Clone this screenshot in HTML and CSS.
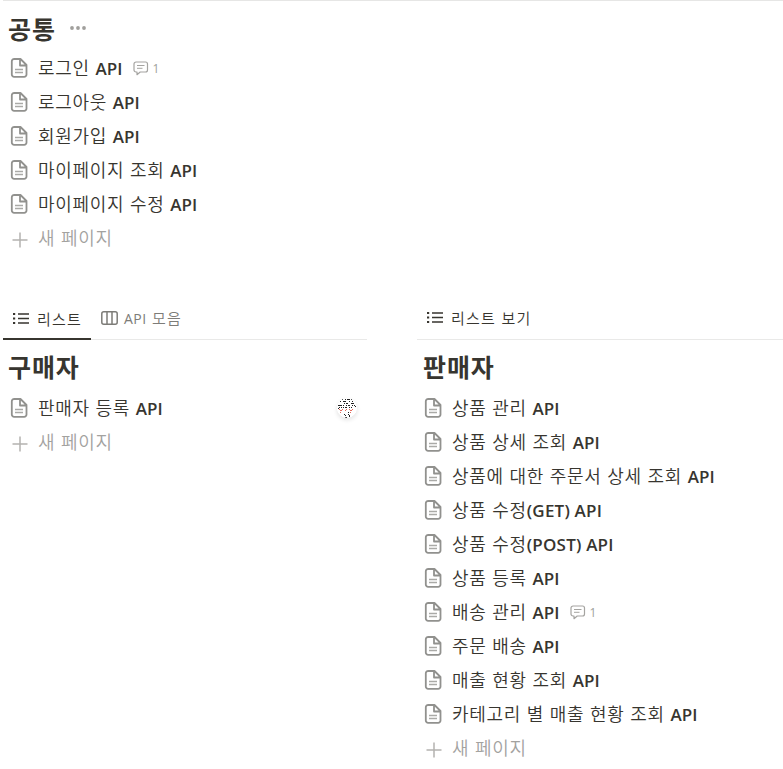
FILE: index.html
```html
<!DOCTYPE html>
<html lang="ko">
<head>
<meta charset="utf-8">
<title>API</title>
<link rel="stylesheet" href="styles.css">
</head>
<body>
<svg class="defs" aria-hidden="true">
  <symbol id="doc" viewBox="0 0 18 22"><path d="M4 2h6.500l6 6v9.500a2.300 2.300 0 0 1-2.300 2.300H4.100a2.300 2.300 0 0 1-2.300-2.300V4.300A2.300 2.300 0 0 1 4.100 2zM10 2.300v6.200h6.200" fill="none" stroke="#91918e" stroke-width="1.800" stroke-linejoin="round"/><path d="M5 12.500h8M5 15.500h8" stroke="#aaaaa7" stroke-width="1.400"/></symbol>
  <symbol id="plus" viewBox="0 0 16 16"><path d="M8 .5v15M.5 8h15" stroke="#b4b3b0" stroke-width="1.500"/></symbol>
  <symbol id="comment" viewBox="0 0 16 15"><path d="M3 1h9.500a2 2 0 0 1 2 2v6a2 2 0 0 1-2 2H7.200L4 13.700V11H3a2 2 0 0 1-2-2V3a2 2 0 0 1 2-2z" fill="none" stroke="#a5a4a1" stroke-width="1.200" stroke-linejoin="round"/><path d="M4 4.500h7.500M4 7.300h5.500" stroke="#a5a4a1"/></symbol>
  <symbol id="list" viewBox="0 0 16 13"><path d="M5 2h11M5 6.500h11M5 11h11" stroke="#37352f" stroke-width="1.500"/><path d="M0 2h2.200M0 6.500h2.200M0 11h2.200" stroke="#37352f" stroke-width="2"/></symbol>
  <symbol id="board" viewBox="0 0 17 14"><rect x=".8" y=".8" width="15.400" height="12.400" rx="2" fill="none" stroke="#7d7c78" stroke-width="1.500"/><path d="M6 1v12M11 1v12" stroke="#7d7c78" stroke-width="1.500"/></symbol>
</svg>
<main>
  <section class="common">
    <h2>공통<svg class="more" viewBox="0 0 16 4"><circle cx="2" cy="2" r="1.900"/><circle cx="8" cy="2" r="1.900"/><circle cx="14" cy="2" r="1.900"/></svg></h2>
    <ul>
      <li><svg class="doc"><use href="#doc"/></svg><span class="name">로그인 <b>API</b></span><span class="count"><svg><use href="#comment"/></svg>1</span></li>
      <li><svg class="doc"><use href="#doc"/></svg><span class="name">로그아웃 <b>API</b></span></li>
      <li><svg class="doc"><use href="#doc"/></svg><span class="name">회원가입 <b>API</b></span></li>
      <li><svg class="doc"><use href="#doc"/></svg><span class="name">마이페이지 조회 <b>API</b></span></li>
      <li><svg class="doc"><use href="#doc"/></svg><span class="name">마이페이지 수정 <b>API</b></span></li>
      <li class="new"><svg class="plus"><use href="#plus"/></svg><span class="name">새 페이지</span></li>
    </ul>
  </section>
  <div class="columns">
    <section>
      <nav><span class="tab active"><svg class="list"><use href="#list"/></svg><span>리스트</span></span><span class="tab muted"><svg class="board"><use href="#board"/></svg><span><b>API</b> 모음</span></span></nav>
      <h2>구매자</h2>
      <ul>
        <li><svg class="doc"><use href="#doc"/></svg><span class="name">판매자 등록 <b>API</b></span>
          <svg class="avatar" viewBox="0 0 20 20" shape-rendering="crispEdges"><circle cx="10" cy="10" r="10" fill="#fff"/><path d="M5 1.500h1M8 1.500h1M10 1.500h3M14 1.500h1M3 3.500h1M6 3.500h3M12 3.500h1M15 3.500h1M7 5.500h1M9 5.500h2M14 5.500h3M1 7.500h4M6 7.500h1M9 7.500h1M11 7.500h2M15 7.500h1M17 7.500h1M2 9.500h1M4 9.500h1M6 9.500h1M8 9.500h2M12 9.500h1M14 9.500h1M18 8.500h1M1 10.500h1M7 16.500h1M11 16.500h1M12 18.500h1M8 19.500h2M11 14.500h1M12 17.500h1M8 17.500h1" stroke="#222"/><path d="M2 11.500h1M5 11.500h1M3 12.500h2M3 14.500h1M8 12.500h1M9 11.500h1M12 11.500h1M15 11.500h1M13 12.500h2M13 14.500h1" stroke="#e26d60"/></svg></li>
        <li class="new"><svg class="plus"><use href="#plus"/></svg><span class="name">새 페이지</span></li>
      </ul>
    </section>
    <section>
      <nav><span class="tab"><svg class="list"><use href="#list"/></svg><span>리스트 보기</span></span></nav>
      <h2>판매자</h2>
      <ul>
        <li><svg class="doc"><use href="#doc"/></svg><span class="name">상품 관리 <b>API</b></span></li>
        <li><svg class="doc"><use href="#doc"/></svg><span class="name">상품 상세 조회 <b>API</b></span></li>
        <li><svg class="doc"><use href="#doc"/></svg><span class="name">상품에 대한 주문서 상세 조회 <b>API</b></span></li>
        <li><svg class="doc"><use href="#doc"/></svg><span class="name">상품 수정<b class="wide">(GET) API</b></span></li>
        <li><svg class="doc"><use href="#doc"/></svg><span class="name">상품 수정<b class="wide">(POST) API</b></span></li>
        <li><svg class="doc"><use href="#doc"/></svg><span class="name">상품 등록 <b>API</b></span></li>
        <li><svg class="doc"><use href="#doc"/></svg><span class="name">배송 관리 <b>API</b></span><span class="count"><svg><use href="#comment"/></svg>1</span></li>
        <li><svg class="doc"><use href="#doc"/></svg><span class="name">주문 배송 <b>API</b></span></li>
        <li><svg class="doc"><use href="#doc"/></svg><span class="name">매출 현황 조회 <b>API</b></span></li>
        <li><svg class="doc"><use href="#doc"/></svg><span class="name">카테고리 별 매출 현황 조회 <b>API</b></span></li>
        <li class="new"><svg class="plus"><use href="#plus"/></svg><span class="name">새 페이지</span></li>
      </ul>
    </section>
  </div>
</main>
</body>
</html>
```
FILE: styles.css
```css
* { box-sizing: border-box; }
body {
  margin: 0;
  background: #fff;
  color: #37352f;
  font-family: "Noto Sans CJK KR", sans-serif;
  overflow: hidden;
}
.defs { position: absolute; width: 0; height: 0; }
svg { flex: none; display: block; }
main { padding-left: 3px; }
.common { border-top: 1px solid #e6e6e5; height: 296px; }
h2 {
  display: flex;
  align-items: center;
  height: 50px;
  margin: 0;
  padding: 3px 0 0 5px;
  font-size: 25px;
  font-weight: 700;
  line-height: 36px;
  letter-spacing: 0.9px;
}
.more { width: 16px; height: 4px; margin-left: 14px; fill: #a09f9c; }
ul { list-style: none; margin: 0; padding: 0; }
li {
  display: flex;
  align-items: center;
  height: 34px;
  padding-left: 7px;
}
.doc { width: 18px; height: 22px; margin-right: 10px; }
.plus { width: 16px; height: 16px; margin: 3px 10px 0 2px; }
.name {
  font-size: 18px;
  font-weight: 350;
  line-height: 34px;
  padding-bottom: 1px;
  letter-spacing: 0.7px;
  white-space: nowrap;
}
.name b, .tab b {
  font-family: "Open Sans", sans-serif;
  font-weight: 600;
  font-size: 17px;
  letter-spacing: 0;
}
.name .wide { letter-spacing: 0.2px; }
.new { color: #a3a29f; }
.new .name { padding-bottom: 2px; }
.count {
  display: flex;
  align-items: center;
  gap: 3px;
  margin-left: 11px;
  color: #a09f9c;
  font: 12px "Open Sans", sans-serif;
}
.count svg { width: 16px; height: 15px; }
.avatar {
  width: 20px;
  height: 20px;
  margin: 0 10px 0 auto;
  border-radius: 50%;
  box-shadow: 0 2px 4px rgba(15, 15, 15, 0.12);
}
.columns {
  display: grid;
  grid-template-columns: 364px 366px;
  column-gap: 50px;
}
nav {
  display: flex;
  height: 44px;
  border-bottom: 1px solid #e9e9e8;
}
.columns h2 { height: 51px; padding-top: 0; }
.columns section + section h2 { padding-left: 6px; }
.tab {
  display: flex;
  align-items: center;
  height: 43px;
  padding: 0 9px 0 10px;
  font-size: 15px;
  font-weight: 350;
  letter-spacing: 1.2px;
  white-space: nowrap;
}
.tab b { font-size: 14px; font-weight: 500; letter-spacing: 0.5px; }
.active { height: 44px; padding-top: 2px; border-bottom: 2px solid #37352f; }
.muted { color: #7d7c78; }
.list { width: 16px; height: 13px; margin-right: 8px; }
.board { width: 17px; height: 14px; margin-right: 6px; }
```
